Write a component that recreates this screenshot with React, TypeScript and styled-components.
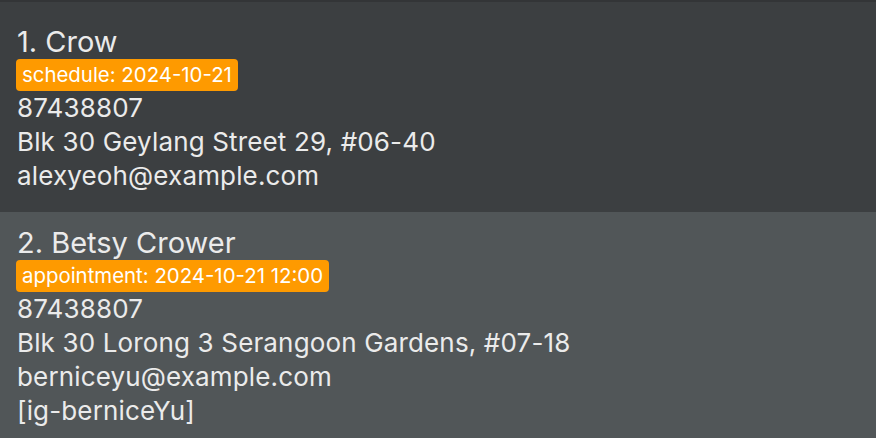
import styled, { createGlobalStyle } from 'styled-components'

const GlobalStyle = createGlobalStyle`
  html, body {
    margin: 0;
    padding: 0;
    background: #515658;
  }
  body {
    font-family: Inter, "Noto Sans", sans-serif;
  }
`

const List = styled.div`
  display: flex;
  flex-direction: column;
  border-top: 2px solid #333537;
  height: 436px;
  overflow: hidden;
`

const Card = styled.div<{ $shade: 'dark' | 'light' }>`
  display: flex;
  flex-direction: column;
  align-items: flex-start;
  padding: 14px 16px 19px;
  background: ${(p) => (p.$shade === 'dark' ? '#3c3f41' : '#515658')};
  color: #ebebeb;

  &:first-child {
    padding-top: 23px;
  }
`

const Name = styled.div`
  font-size: 29px;
  line-height: 34px;
  padding-left: 1px;
`

const Tag = styled.span`
  display: inline-block;
  background: #fe9a00;
  color: #ffffff;
  font-size: 20.4px;
  line-height: 24px;
  padding: 4px 6px;
  border-radius: 4px;
`

const Detail = styled.div`
  font-size: 26px;
  line-height: 34px;
  letter-spacing: 0.15px;
  padding-left: 1px;
`

type Person = {
  name: string
  tag: string
  phone: string
  address: string
  email: string
  social?: string
}

const people: Person[] = [
  {
    name: 'Crow',
    tag: 'schedule: 2024-10-21',
    phone: '87438807',
    address: 'Blk 30 Geylang Street 29, #06-40',
    email: 'alexyeoh@example.com',
  },
  {
    name: 'Betsy Crower',
    tag: 'appointment: 2024-10-21 12:00',
    phone: '87438807',
    address: 'Blk 30 Lorong 3 Serangoon Gardens, #07-18',
    email: 'berniceyu@example.com',
    social: '[ig-berniceYu]',
  },
]

export default function App() {
  return (
    <>
      <GlobalStyle />
      <List>
        {people.map((p, i) => (
          <Card key={p.name} $shade={i % 2 === 0 ? 'dark' : 'light'}>
            <Name>
              {i + 1}. {p.name}
            </Name>
            <Tag>{p.tag}</Tag>
            <Detail>{p.phone}</Detail>
            <Detail>{p.address}</Detail>
            <Detail>{p.email}</Detail>
            {p.social && <Detail>{p.social}</Detail>}
          </Card>
        ))}
      </List>
    </>
  )
}
